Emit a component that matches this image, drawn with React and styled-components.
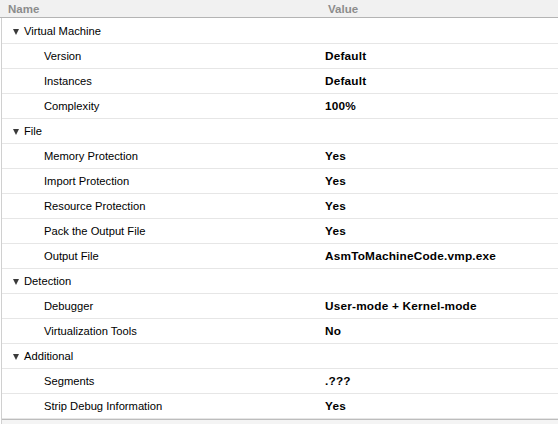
import React from "react";
import styled, { createGlobalStyle } from "styled-components";

const Global = createGlobalStyle`
  html, body { margin: 0; padding: 0; background: #fff; }
  body { font-family: "Liberation Sans", Arial, sans-serif; font-size: 11.2px; color: #000; }
  #root { width: 558px; height: 424px; overflow: hidden; }
`;

const Grid = styled.div`
  width: 558px;
  height: 424px;
  overflow: hidden;
  display: flex;
  flex-direction: column;
`;

const Header = styled.div`
  display: grid;
  grid-template-columns: 328px 1fr;
  height: 17px;
  align-items: center;
  background: #f1f1f1;
  border-bottom: 1px solid #b4b4b4;
  color: #8c8c8c;
  font-weight: bold;
  font-size: 11.5px;
  flex-shrink: 0;
`;

const HeadCell = styled.div`
  padding-left: ${(p) => p.$pad}px;
`;

const Body = styled.div`
  flex: 1;
  margin-left: 1px;
  border-left: 1px solid #d0d0d0;
  padding-top: 1px;
  overflow: hidden;
`;

const Row = styled.div`
  display: grid;
  grid-template-columns: 323px 1fr;
  height: 24px;
  align-items: center;
  border-bottom: 1px solid #e6e6e6;
  flex-shrink: 0;
`;

const NameCell = styled.div`
  display: flex;
  align-items: center;
  padding-left: ${(p) => (p.$group ? 11 : 42)}px;
  white-space: nowrap;
`;

const Arrow = styled.span`
  display: inline-block;
  width: 0;
  height: 0;
  border-left: 3.5px solid transparent;
  border-right: 3.5px solid transparent;
  border-top: 6px solid #3a3a3a;
  margin-right: 5px;
  margin-top: 1px;
`;

const ValueCell = styled.div`
  font-weight: bold;
  font-size: 11.8px;
  letter-spacing: 0.2px;
  white-space: nowrap;
`;

const Scroll = styled.div`
  border-top: 1px solid #bdbdbd;
  height: 6px;
  background: #f4f4f4;
`;

const data = [
  { group: "Virtual Machine", items: [["Version", "Default"], ["Instances", "Default"], ["Complexity", "100%"]] },
  { group: "File", items: [["Memory Protection", "Yes"], ["Import Protection", "Yes"], ["Resource Protection", "Yes"], ["Pack the Output File", "Yes"], ["Output File", "AsmToMachineCode.vmp.exe"]] },
  { group: "Detection", items: [["Debugger", "User-mode + Kernel-mode"], ["Virtualization Tools", "No"]] },
  { group: "Additional", items: [["Segments", ".???"], ["Strip Debug Information", "Yes"]] },
];

export default function App() {
  return (
    <>
      <Global />
      <Grid>
        <Header>
          <HeadCell $pad={8}>Name</HeadCell>
          <HeadCell $pad={0}>Value</HeadCell>
        </Header>
        <Body>
          {data.map((g) => (
            <React.Fragment key={g.group}>
              <Row>
                <NameCell $group>
                  <Arrow />
                  {g.group}
                </NameCell>
                <ValueCell />
              </Row>
              {g.items.map(([n, v]) => (
                <Row key={n}>
                  <NameCell>{n}</NameCell>
                  <ValueCell>{v}</ValueCell>
                </Row>
              ))}
            </React.Fragment>
          ))}
          <Scroll />
        </Body>
      </Grid>
    </>
  );
}
